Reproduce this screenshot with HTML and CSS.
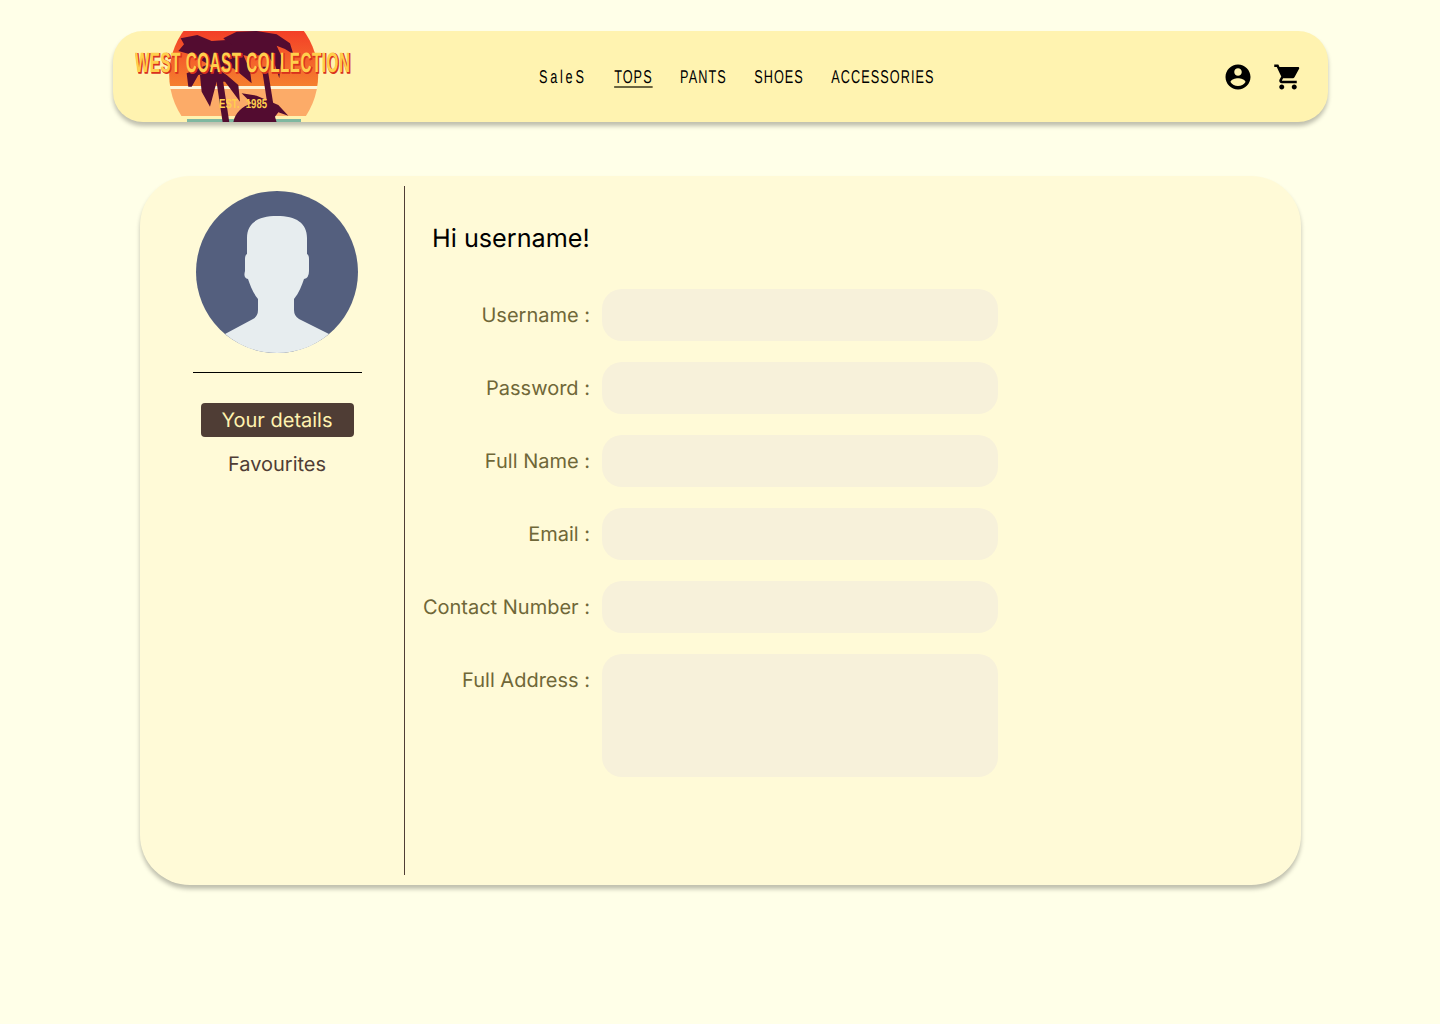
FILE: index.html
```html
<!DOCTYPE html>
<html lang="en">
  <head>
    <meta charset="UTF-8" />
    <meta name="viewport" content="width=device-width, initial-scale=1.0" />
    <title>West Coast Collection</title>
    <link rel="stylesheet" href="styles.css">
  </head>
  <body>
    <header class="topbar">
      <svg class="logo" viewBox="0 0 217 91" width="217" height="91" aria-label="West Coast Collection logo">
        <defs>
          <linearGradient id="sun" x1="0" y1="0" x2="0" y2="1">
            <stop offset="0" stop-color="#f33f27" />
            <stop offset="1" stop-color="#f5802f" />
          </linearGradient>
          <clipPath id="sun-clip">
            <circle cx="108.7" cy="44" r="74.5" />
          </clipPath>
        </defs>
        <g clip-path="url(#sun-clip)">
          <rect x="30" y="0" width="160" height="55" fill="url(#sun)" />
          <rect x="30" y="55" width="160" height="3" fill="#fff6d8" />
          <rect x="30" y="58" width="160" height="27" fill="#fcab68" />
        </g>
        <rect x="52" y="88" width="114" height="3" fill="#7fb8a0" />
        <g class="palm" transform="translate(-25 -6) scale(.3333)">
          <path d="M315 140 L335 140 L358 292 L338 292 Z" />
          <path d="M455 125 L472 125 L492 250 L474 250 Z" />
          <path d="M340 40 L380 20 L440 18 L500 28 L540 55 L550 88 L525 72 L500 62 L515 95 L508 160 L495 120 L472 92 L455 90 L420 95 L400 90 L370 70 Z" />
          <path d="M205 78 L222 58 L212 40 L262 30 L305 48 L350 45 L400 90 L420 135 L425 175 L395 150 L370 130 L340 130 L290 115 L240 88 Z" />
          <path d="M230 145 L290 120 L320 135 L290 145 L265 150 L245 185 L235 185 Z" />
          <path d="M270 150 L320 130 L350 150 L385 180 L390 230 L360 190 L345 170 L320 170 L300 245 L275 200 Z" />
          <path d="M370 292 C375 265 395 245 425 235 L395 205 L440 212 L470 225 L505 240 L535 272 L505 262 L495 275 L500 292 Z" />
        </g>
        <text class="logo-title logo-title-shadow" transform="translate(1 42) scale(.542 1)">WEST COAST COLLECTION</text>
        <text class="logo-title" transform="translate(0 41) scale(.542 1)">WEST COAST COLLECTION</text>
        <text class="logo-est" transform="translate(84 77) scale(.74 1)">EST. 1985</text>
      </svg>
      <nav class="topnav">
        <a href="#" class="wide">SaleS</a>
        <a href="#" class="current">TOPS</a>
        <a href="#">PANTS</a>
        <a href="#">SHOES</a>
        <a href="#">ACCESSORIES</a>
      </nav>
      <div class="topbar-icons">
        <svg viewBox="0 0 24 24" width="30" height="30"><path d="M12 2C6.48 2 2 6.48 2 12s4.48 10 10 10 10-4.48 10-10S17.52 2 12 2zm0 3c1.66 0 3 1.34 3 3s-1.34 3-3 3-3-1.34-3-3 1.34-3 3-3zm0 14.2c-2.5 0-4.71-1.28-6-3.22.03-1.99 4-3.08 6-3.08 1.99 0 5.97 1.09 6 3.08-1.29 1.94-3.5 3.22-6 3.22z" /></svg>
        <svg viewBox="0 0 24 24" width="30" height="30"><path d="M7 18c-1.1 0-1.99.9-1.99 2S5.9 22 7 22s2-.9 2-2-.9-2-2-2zM1 2v2h2l3.6 7.59-1.35 2.45c-.16.28-.25.61-.25.96 0 1.1.9 2 2 2h12v-2H7.42c-.14 0-.25-.11-.25-.25l.03-.12.9-1.63h7.45c.75 0 1.41-.41 1.75-1.03l3.58-6.49c.08-.14.12-.31.12-.48 0-.55-.45-1-1-1H5.21l-.94-2H1zm16 16c-1.1 0-1.99.9-1.99 2s.89 2 1.99 2 2-.9 2-2-.9-2-2-2z" /></svg>
      </div>
    </header>

    <main class="account-card">
      <aside class="account-side">
        <svg class="avatar" viewBox="0 0 162 162" width="162" height="162">
          <circle cx="81" cy="81" r="81" fill="#545f7e" />
          <path fill="#e7edef" d="M29 143 L57 128 Q62 125 62 119 L62 108 C57 102 54 94 52 88 Q47 87 49 80 L49 68 Q49 64 51 63 L51 47 C51 32 62 25 81 25 C100 25 111 32 111 47 L111 63 Q113 64 113 68 L113 80 Q113 87 108 88 C106 94 103 102 98 108 L98 119 Q98 125 103 128 L133 143 A81 81 0 0 1 81 162 A81 81 0 0 1 29 143 Z" />
        </svg>
        <hr class="side-rule" />
        <a href="#" class="side-link active">Your details</a>
        <a href="#" class="side-link">Favourites</a>
      </aside>
      <section class="account-main">
        <h1>Hi username!</h1>
        <form class="details-form">
          <label for="username">Username :</label>
          <input id="username" type="text" />
          <label for="password">Password :</label>
          <input id="password" type="password" />
          <label for="fullname">Full Name :</label>
          <input id="fullname" type="text" />
          <label for="email">Email :</label>
          <input id="email" type="email" />
          <label for="contact">Contact Number :</label>
          <input id="contact" type="text" />
          <label for="address">Full Address :</label>
          <textarea id="address"></textarea>
        </form>
      </section>
    </main>
  </body>
</html>
```

FILE: styles.css
```css
* {
  box-sizing: border-box;
}
body {
  margin: 0;
  min-height: 1024px;
  padding-top: 31px;
  background-color: #ffffe8;
  font-family: Inter, "Liberation Sans", sans-serif;
  text-rendering: geometricPrecision;
}

/* top bar */
.topbar {
  display: flex;
  align-items: center;
  width: 1215px;
  height: 91px;
  margin-left: 113px;
  padding: 0 25px 0 22px;
  border-radius: 30px;
  background-color: #fff3b0;
  box-shadow: 0 4px 4px rgba(0, 0, 0, 0.25);
}
.logo {
  flex: none;
  display: block;
}
.palm {
  fill: #530c30;
}
.logo-title {
  font-family: "Liberation Sans", sans-serif;
  font-weight: 700;
  font-size: 28px;
  letter-spacing: 1px;
  fill: #ffcf4d;
}
.logo-title-shadow {
  fill: #d9301c;
  stroke: #d9301c;
  stroke-width: 1.4px;
}
.logo-est {
  font-family: "Liberation Sans", sans-serif;
  font-weight: 700;
  font-size: 13px;
  word-spacing: 5px;
  fill: #ffcf4d;
}
/* no condensed font here, so the row is squeezed sideways */
.topnav {
  display: flex;
  gap: 40px;
  margin-left: 187px;
  transform: scaleX(0.687);
  transform-origin: left center;
}
.topnav a {
  color: #000;
  font-family: "Liberation Sans", sans-serif;
  font-size: 18.5px;
  letter-spacing: 1.5px;
  text-decoration: none;
}
.topnav a.wide {
  letter-spacing: 4px;
}
.topnav a.current {
  text-decoration: underline;
  text-decoration-color: #6b6540;
  text-decoration-thickness: 2px;
  text-underline-offset: 3px;
}
.topbar-icons {
  display: flex;
  gap: 20px;
  margin-left: auto;
}
.topbar-icons svg {
  display: block;
}

/* account card */
.account-card {
  display: flex;
  width: 1161px;
  height: 709px;
  margin: 54px 0 0 140px;
  padding: 10px 0 10px;
  border-radius: 50px;
  background-color: #fffad7;
  box-shadow: 0 4px 4px rgba(0, 0, 0, 0.25);
}
.account-side {
  display: flex;
  flex-direction: column;
  align-items: center;
  flex: none;
  width: 265px;
  padding: 5px 0 0 10px;
  border-right: 1px solid #4f3d35;
}
.avatar {
  display: block;
}
.side-rule {
  width: 169px;
  margin: 19px 0 30px;
  border: 0;
  border-top: 1px solid #000;
}
.side-link {
  display: block;
  width: 153px;
  height: 34px;
  margin-bottom: 10px;
  border-radius: 4px;
  color: #4f3d35;
  font-size: 20px;
  line-height: 34px;
  text-align: center;
  text-decoration: none;
}
.side-link.active {
  background-color: #4f3d35;
  color: #fff3b0;
}
.account-main {
  flex: 1;
}
.account-main h1 {
  margin: 37px 0 33px 27px;
  color: #000;
  font-size: 25.2px;
  font-weight: 400;
  line-height: 33px;
}
.details-form {
  display: grid;
  grid-template-columns: 185px 396px;
  column-gap: 12px;
  row-gap: 21px;
}
.details-form label {
  color: #6f6738;
  font-size: 20px;
  line-height: 52px;
  text-align: right;
  white-space: nowrap;
}
.details-form input,
.details-form textarea {
  display: block;
  width: 396px;
  height: 52px;
  border: 0;
  border-radius: 20px;
  background-color: #f7f1da;
  resize: none;
}
.details-form textarea {
  height: 123px;
}
```
